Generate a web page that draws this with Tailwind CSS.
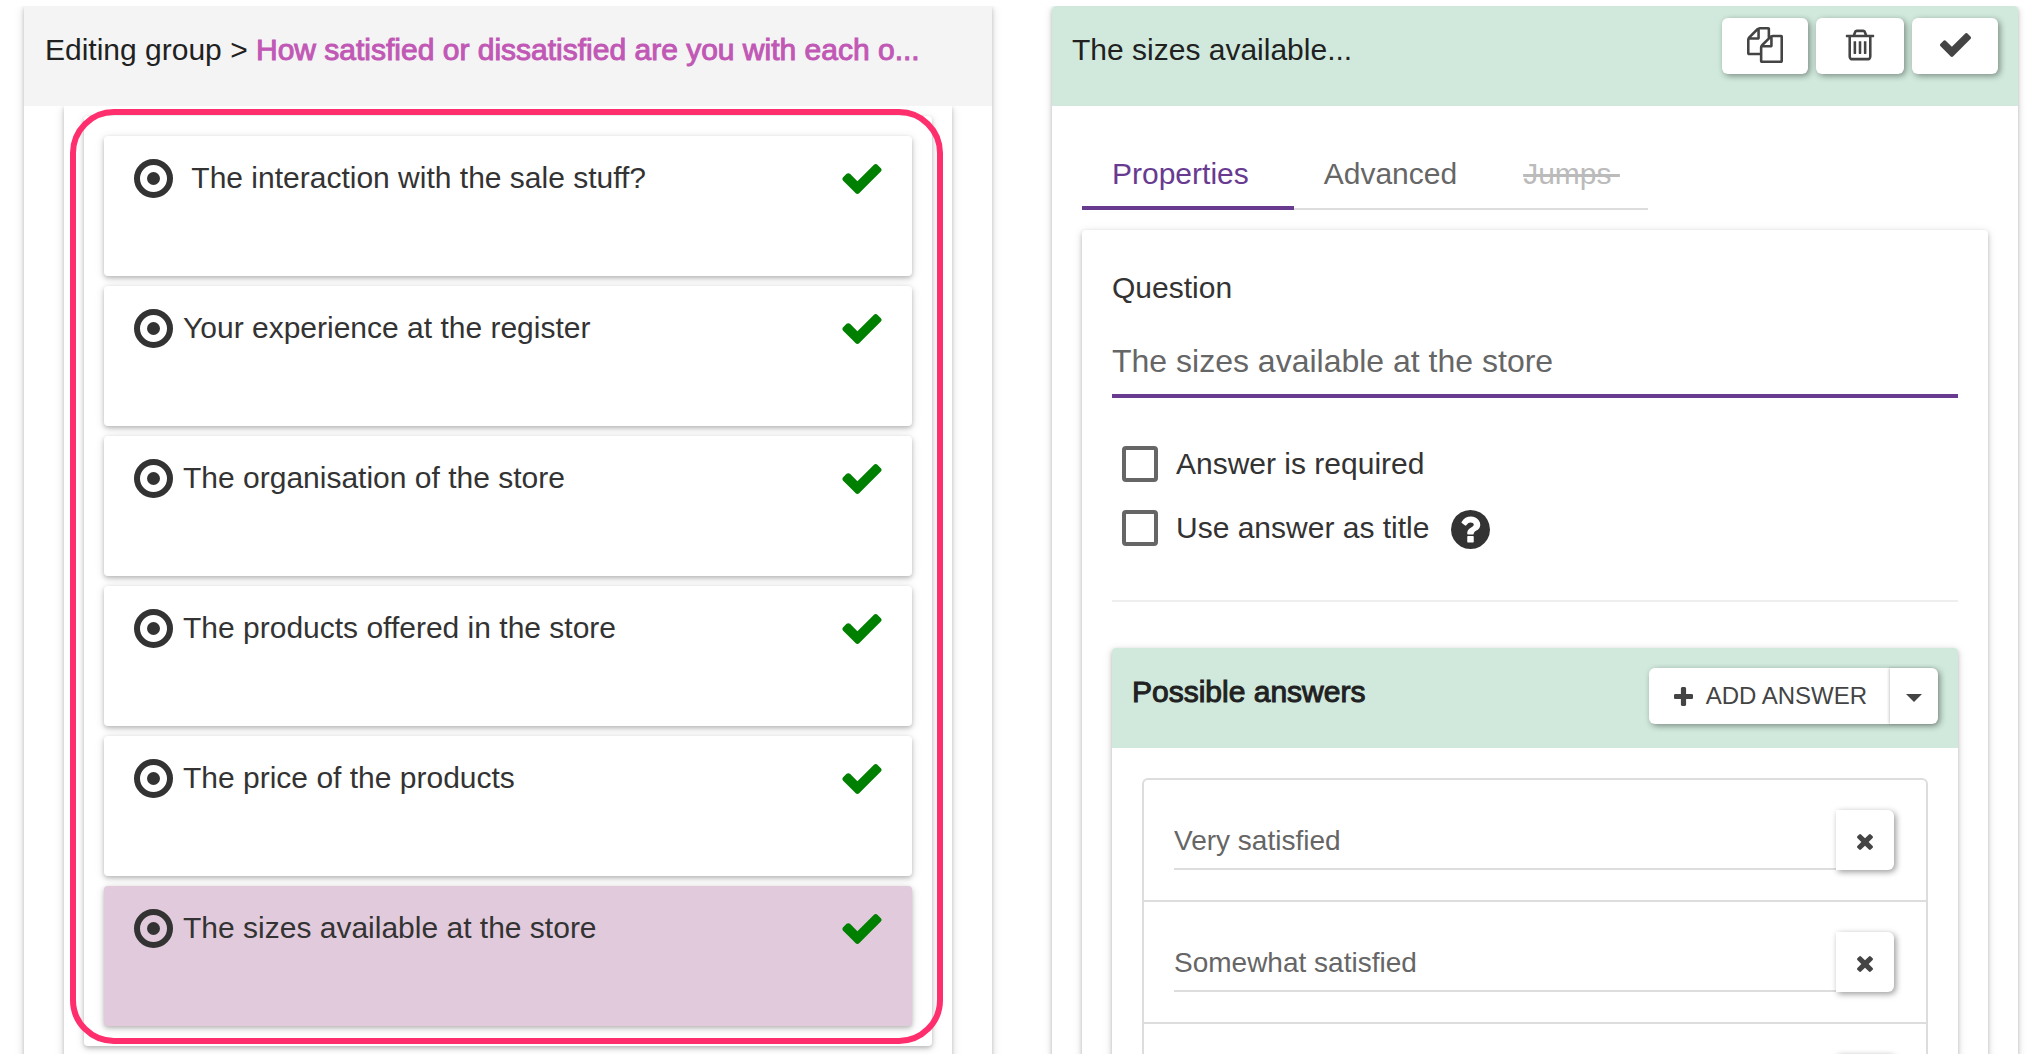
<!DOCTYPE html>
<html lang="en">
<head>
<meta charset="utf-8">
<title>Survey editor</title>
<script src="https://cdn.jsdelivr.net/npm/@tailwindcss/browser@4"></script>
</head>
<body class="bg-white">
<svg class="hidden" aria-hidden="true">
  <symbol id="check" viewBox="121 334 1550 1188"><path d="M1671 566q0 40-28 68l-724 724-136 136q-28 28-68 28t-68-28l-136-136-362-362q-28-28-28-68t28-68l136-136q28-28 68-28t68 28l294 295 656-657q28-28 68-28t68 28l136 136q28 28 28 68z"/></symbol>
  <symbol id="radio" viewBox="0 0 39 39"><circle cx="19.500" cy="19.500" r="16.500" fill="none" stroke="currentColor" stroke-width="6"/><circle cx="19.500" cy="19.500" r="6.500"/></symbol>
  <symbol id="times" viewBox="302 366 1188 1188"><path d="M1490 1322q0 40-28 68l-136 136q-28 28-68 28t-68-28l-294-294-294 294q-28 28-68 28t-68-28l-136-136q-28-28-28-68t28-68l294-294-294-294q-28-28-28-68t28-68l136-136q28-28 68-28t68 28l294 294 294-294q28-28 68-28t68 28l136 136q28 28 28 68t-28 68l-294 294 294 294q28 28 28 68z"/></symbol>
</svg>
<div class="h-screen overflow-hidden pt-1.5 font-['Liberation_Sans',Arial,sans-serif] text-[30px] leading-10 text-[#333]">
  <div class="grid h-full grid-cols-[968fr_966fr] gap-[60px] overflow-hidden px-6">

    <section class="flex h-screen flex-col shadow-[0_2px_4px_rgba(0,0,0,0.2),0_2px_10px_rgba(0,0,0,0.14)]">
      <header class="relative z-10 h-[100px] shrink-0 bg-[#f4f4f4] px-[21px] pt-6 text-[#212121]">
        <h1 class="whitespace-nowrap">Editing group &gt; <span class="text-[#c158b5] [-webkit-text-stroke:1px]">How satisfied or dissatisfied are you with each o...</span></h1>
      </header>
      <div class="mx-10 grow px-5 pt-2.5 shadow-[0_2px_4px_rgba(0,0,0,0.2),0_2px_10px_rgba(0,0,0,0.14)]">
        <div class="relative rounded p-5 shadow-[0_2px_4px_rgba(0,0,0,0.2),0_2px_10px_rgba(0,0,0,0.14)]">
          <ul class="flex flex-col gap-2.5">
            <li class="flex h-[140px] items-start rounded bg-white px-[30px] pt-[22px] shadow-[0_2px_4px_rgba(0,0,0,0.2),0_2px_10px_rgba(0,0,0,0.14)]">
              <svg class="mt-px size-[39px] fill-current"><use href="#radio"/></svg>
              <span class="grow pl-2.5">&nbsp;The interaction with the sale stuff?</span>
              <svg class="mt-1.5 h-[30px] w-10 fill-[#008000]"><use href="#check"/></svg>
            </li>
            <li class="flex h-[140px] items-start rounded bg-white px-[30px] pt-[22px] shadow-[0_2px_4px_rgba(0,0,0,0.2),0_2px_10px_rgba(0,0,0,0.14)]">
              <svg class="mt-px size-[39px] fill-current"><use href="#radio"/></svg>
              <span class="grow pl-2.5">Your experience at the register</span>
              <svg class="mt-1.5 h-[30px] w-10 fill-[#008000]"><use href="#check"/></svg>
            </li>
            <li class="flex h-[140px] items-start rounded bg-white px-[30px] pt-[22px] shadow-[0_2px_4px_rgba(0,0,0,0.2),0_2px_10px_rgba(0,0,0,0.14)]">
              <svg class="mt-px size-[39px] fill-current"><use href="#radio"/></svg>
              <span class="grow pl-2.5">The organisation of the store</span>
              <svg class="mt-1.5 h-[30px] w-10 fill-[#008000]"><use href="#check"/></svg>
            </li>
            <li class="flex h-[140px] items-start rounded bg-white px-[30px] pt-[22px] shadow-[0_2px_4px_rgba(0,0,0,0.2),0_2px_10px_rgba(0,0,0,0.14)]">
              <svg class="mt-px size-[39px] fill-current"><use href="#radio"/></svg>
              <span class="grow pl-2.5">The products offered in the store</span>
              <svg class="mt-1.5 h-[30px] w-10 fill-[#008000]"><use href="#check"/></svg>
            </li>
            <li class="flex h-[140px] items-start rounded bg-white px-[30px] pt-[22px] shadow-[0_2px_4px_rgba(0,0,0,0.2),0_2px_10px_rgba(0,0,0,0.14)]">
              <svg class="mt-px size-[39px] fill-current"><use href="#radio"/></svg>
              <span class="grow pl-2.5">The price of the products</span>
              <svg class="mt-1.5 h-[30px] w-10 fill-[#008000]"><use href="#check"/></svg>
            </li>
            <li class="flex h-[140px] items-start rounded bg-[#e1cadb] px-[30px] pt-[22px] shadow-[0_2px_4px_rgba(0,0,0,0.2),0_2px_10px_rgba(0,0,0,0.14)]">
              <svg class="mt-px size-[39px] fill-current"><use href="#radio"/></svg>
              <span class="grow pl-2.5">The sizes available at the store</span>
              <svg class="mt-1.5 h-[30px] w-10 fill-[#008000]"><use href="#check"/></svg>
            </li>
          </ul>
          <!-- highlight ring around the group's questions -->
          <div class="pointer-events-none absolute -left-3.5 -right-[11px] -top-[7px] bottom-0.5 rounded-[44px] border-6 border-[#ff2e6d]"></div>
        </div>
      </div>
    </section>

    <section class="min-h-screen rounded shadow-[0_2px_4px_rgba(0,0,0,0.2),0_2px_10px_rgba(0,0,0,0.14)]">
      <header class="flex h-[100px] items-start rounded-t bg-[#d0e9dc] px-5 pt-3 text-[#212121]">
        <h2 class="grow pt-3">The sizes available...</h2>
        <div class="flex gap-2 text-[#444]">
          <button aria-label="Duplicate" class="flex h-14 w-[86px] items-center justify-center rounded-md bg-white pb-0.5 shadow-[2px_2px_6px_rgba(0,0,0,0.4)]">
            <svg class="size-9 fill-current" viewBox="0 0 1792 1792"><path d="M1696 384q40 0 68 28t28 68v1216q0 40-28 68t-68 28h-960q-40 0-68-28t-28-68v-288h-544q-40 0-68-28t-28-68v-672q0-40 20-88t48-76l408-408q28-28 76-48t88-20h416q40 0 68 28t28 68v328q68-40 128-40h416zm-544 213l-299 299h299v-299zm-640-384l-299 299h299v-299zm196 647l316-316v-416h-384v416q0 40-28 68t-68 28h-416v640h512v-256q0-40 20-88t48-76zm956 804v-1152h-384v416q0 40-28 68t-68 28h-416v640h896z"/></svg>
          </button>
          <button aria-label="Delete" class="flex h-14 w-[88px] items-center justify-center rounded-md bg-white pb-0.5 shadow-[2px_2px_6px_rgba(0,0,0,0.4)]">
            <svg class="size-9 fill-current" viewBox="0 0 1792 1792"><path d="M704 736v576q0 14-9 23t-23 9h-64q-14 0-23-9t-9-23v-576q0-14 9-23t23-9h64q14 0 23 9t9 23zm256 0v576q0 14-9 23t-23 9h-64q-14 0-23-9t-9-23v-576q0-14 9-23t23-9h64q14 0 23 9t9 23zm256 0v576q0 14-9 23t-23 9h-64q-14 0-23-9t-9-23v-576q0-14 9-23t23-9h64q14 0 23 9t9 23zm128 724v-948h-896v948q0 22 7 40.500t14.500 27 10.500 8.500h832q3 0 10.500-8.500t14.500-27 7-40.500zm-672-1076h448l-48-117q-7-9-17-11h-317q-10 2-17 11zm928 32v64q0 14-9 23t-23 9h-96v948q0 83-47 143.500t-113 60.500h-832q-66 0-113-58.500t-47-141.500v-952h-96q-14 0-23-9t-9-23v-64q0-14 9-23t23-9h309l70-167q15-37 54-63t79-26h320q40 0 79 26t54 63l70 167h309q14 0 23 9t9 23z"/></svg>
          </button>
          <button aria-label="Done" class="flex h-14 w-[86px] items-center justify-center rounded-md bg-white pb-0.5 shadow-[2px_2px_6px_rgba(0,0,0,0.4)]">
            <svg class="h-6 w-[31px] fill-current"><use href="#check"/></svg>
          </button>
        </div>
      </header>

      <div class="px-[30px] pt-10">
        <nav class="flex">
          <a href="#properties" class="h-16 border-b-4 border-[#683b91] pl-[30px] pr-[45px] pt-2 text-[#683b91]">Properties</a>
          <a href="#advanced" class="h-16 border-b-2 border-[#ddd] pl-[30px] pr-9 pt-2 text-[#666]">Advanced</a>
          <a href="#jumps" class="h-16 border-b-2 border-[#ddd] pl-[30px] pr-7 pt-2 text-[#bbb] line-through">Jumps&nbsp;</a>
        </nav>

        <div class="mt-5 rounded px-[30px] pt-[38px] shadow-[0_2px_4px_rgba(0,0,0,0.2),0_2px_10px_rgba(0,0,0,0.14)]">
          <label for="question" class="block">Question</label>
          <input id="question" type="text" value="The sizes available at the store" class="mt-5 block h-[70px] w-full border-b-4 border-[#683b91] text-[32px] text-[#666] outline-none">

          <div class="mt-[46px] flex flex-col gap-6 pl-2.5">
            <label class="flex h-10 items-center gap-[18px]"><input type="checkbox" class="size-9 appearance-none rounded border-4 border-[#666] bg-white">Answer is required</label>
            <div class="flex h-10 items-center gap-[22px]">
              <label class="flex items-center gap-[18px]"><input type="checkbox" class="size-9 appearance-none rounded border-4 border-[#666] bg-white">Use answer as title</label>
              <svg class="mt-0.5 size-[39px] fill-current" viewBox="128 128 1536 1536"><path d="M1024 1376v-192q0-14-9-23t-23-9h-192q-14 0-23 9t-9 23v192q0 14 9 23t23 9h192q14 0 23-9t9-23zm256-672q0-88-55.500-163t-138.500-116-170-41q-243 0-371 213-15 24 8 42l132 100q7 6 19 6 16 0 25-12 53-68 86-92 34-24 86-24 48 0 85.500 26t37.500 59q0 38-20 61t-68 45q-63 28-115.500 86.500t-52.500 125.500v36q0 14 9 23t23 9h192q14 0 23-9t9-23q0-19 21.500-49.500t54.500-49.500q32-18 49-28.500t46-35 44.500-48 28-60.500 12.500-81zm384 192q0 209-103 385.500t-279.500 279.500-385.500 103-385.500-103-279.500-279.500-103-385.500 103-385.500 279.500-279.500 385.500-103 385.500 103 279.500 279.500 103 385.500z"/></svg>
            </div>
          </div>

          <hr class="mt-[52px] border-t-2 border-[#eee]">

          <div class="mt-[46px] rounded shadow-[0_2px_4px_rgba(0,0,0,0.2),0_2px_10px_rgba(0,0,0,0.14)]">
            <header class="flex h-[100px] items-start rounded-t bg-[#d0e9dc] px-5 pt-5">
              <h3 class="grow pt-1 text-[#212121] [-webkit-text-stroke:1px]">Possible answers</h3>
              <div class="flex h-14 rounded-md bg-white text-2xl text-[#444] shadow-[2px_2px_6px_rgba(0,0,0,0.4)]">
                <button class="flex items-center gap-[13px] px-[25px] pr-[23px]">
                  <svg class="size-[19px] fill-current" viewBox="192 128 1408 1408"><path d="M1600 736v192q0 40-28 68t-68 28h-416v416q0 40-28 68t-68 28h-192q-40 0-68-28t-28-68v-416h-416q-40 0-68-28t-28-68v-192q0-40 28-68t68-28h416v-416q0-40 28-68t68-28h192q40 0 68 28t28 68v416h416q40 0 68 28t28 68z"/></svg>
                  ADD ANSWER
                </button>
                <button aria-label="More answer options" class="flex w-12 items-center justify-center rounded-r-md pt-1 shadow-[-1px_0_3px_rgba(0,0,0,0.2)]">
                  <svg class="h-2 w-4 fill-current" viewBox="0 0 16 8"><path d="M0 0h16L8 8z"/></svg>
                </button>
              </div>
            </header>

            <div class="p-[30px]">
              <ul class="divide-y-2 divide-[#ddd] rounded-md border-2 border-[#ddd] text-[28px]">
                <li class="flex px-[30px] py-[30px] pr-8">
                  <input type="text" aria-label="Answer 1" value="Very satisfied" class="h-[60px] min-w-0 grow border-b-2 border-[#ddd] pt-1 text-[#666] outline-none">
                  <button aria-label="Remove answer 1" class="flex h-[60px] w-[58px] items-center justify-center rounded-r-md bg-white pt-1 text-[#444] shadow-[2px_2px_6px_rgba(0,0,0,0.4)]"><svg class="size-4 fill-current"><use href="#times"/></svg></button>
                </li>
                <li class="flex px-[30px] py-[30px] pr-8">
                  <input type="text" aria-label="Answer 2" value="Somewhat satisfied" class="h-[60px] min-w-0 grow border-b-2 border-[#ddd] pt-1 text-[#666] outline-none">
                  <button aria-label="Remove answer 2" class="flex h-[60px] w-[58px] items-center justify-center rounded-r-md bg-white pt-1 text-[#444] shadow-[2px_2px_6px_rgba(0,0,0,0.4)]"><svg class="size-4 fill-current"><use href="#times"/></svg></button>
                </li>
                <li class="flex px-[30px] py-[30px] pr-8">
                  <input type="text" aria-label="Answer 3" class="h-[60px] min-w-0 grow border-b-2 border-[#ddd] pt-1 text-[#666] outline-none">
                  <button aria-label="Remove answer 3" class="flex h-[60px] w-[58px] items-center justify-center rounded-r-md bg-white pt-1 text-[#444] shadow-[2px_2px_6px_rgba(0,0,0,0.4)]"><svg class="size-4 fill-current"><use href="#times"/></svg></button>
                </li>
              </ul>
            </div>
          </div>
        </div>
      </div>
    </section>
  </div>
</div>
</body>
</html>
